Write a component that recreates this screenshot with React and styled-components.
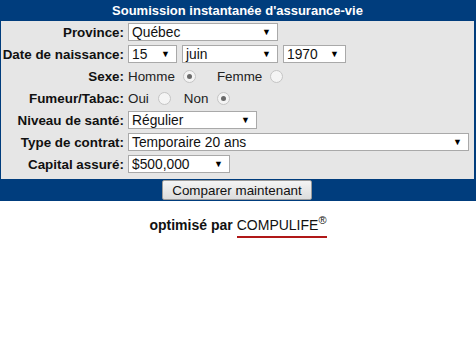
import React from 'react';
import styled, { createGlobalStyle } from 'styled-components';

const GlobalStyle = createGlobalStyle`
  html, body {
    margin: 0;
    padding: 0;
    background: #fff;
    font-family: "Liberation Sans", Arial, sans-serif;
    font-size: 13px;
    color: #000;
  }
`;

const Form = styled.form`
  display: flex;
  flex-direction: column;
  width: 476px;
  border-left: 1px solid #003d7d;
  border-right: 2px solid #003d7d;
  box-sizing: border-box;
`;

const Title = styled.div`
  height: 21px;
  line-height: 21px;
  background: #003d7d;
  color: #fff;
  font-weight: bold;
  font-size: 13px;
  text-align: center;
`;

const Body = styled.div`
  display: grid;
  grid-template-columns: 123px 1fr;
  grid-auto-rows: 22px;
  column-gap: 4px;
  align-items: center;
  background: #e6e6e6;
  padding-bottom: 4px;
`;

const Label = styled.label`
  text-align: right;
  font-weight: bold;
  font-size: 13.4px;
  color: #111;
`;

const Field = styled.div`
  display: flex;
  align-items: center;
  gap: ${p => p.$gap ?? 5}px;
`;

const SelectBox = styled.div`
  display: flex;
  align-items: center;
  justify-content: space-between;
  width: ${p => p.$w}px;
  height: 18px;
  box-sizing: border-box;
  padding: 0 6px 0 3px;
  background: #fff;
  border: 1px solid #a9a9a9;
  color: #111;
  font-size: 13.8px;
`;

const Arrow = styled.span`
  font-size: 9px;
  color: #000;
`;

const Option = styled.span`
  color: #222;
  font-size: 13.4px;
  margin-right: ${p => p.$mr || 0}px;
`;

const Radio = styled.span`
  display: inline-flex;
  align-items: center;
  justify-content: center;
  width: 11px;
  height: 11px;
  border-radius: 50%;
  border: 1px solid #c4c4c4;
  background: #f4f4f4;
  margin-right: ${p => p.$mr || 0}px;
  &::after {
    content: '';
    width: 5px;
    height: 5px;
    border-radius: 50%;
    background: ${p => (p.$checked ? '#6a6a6a' : 'transparent')};
  }
`;

const ButtonBar = styled.div`
  display: flex;
  justify-content: center;
  align-items: center;
  height: 22px;
  background: #003d7d;
`;

const Button = styled.button`
  width: 150px;
  height: 20px;
  margin-left: -1px;
  padding: 0;
  font-family: "Liberation Sans", Arial, sans-serif;
  font-size: 13.4px;
  color: #111;
  background: linear-gradient(#f4f4f4, #dcdcdc);
  border: 1px solid #9a9a9a;
  border-radius: 2px;
`;

const Footer = styled.div`
  display: flex;
  justify-content: center;
  align-items: flex-start;
  padding-top: 16px;
  font-size: 14px;
  color: #111;
`;

const Strong = styled.b`
  margin-right: 4px;
  line-height: 16px;
`;

const Brand = styled.span`
  border-bottom: 2px solid #b01818;
  padding-bottom: 3px;
  line-height: 16px;
`;

const Sup = styled.sup`
  font-size: 11px;
  line-height: 0;
`;

const Select = ({ w, children }) => (
  <SelectBox $w={w}>
    <span>{children}</span>
    <Arrow>▼</Arrow>
  </SelectBox>
);

export default function App() {
  return (
    <>
      <GlobalStyle />
      <Form>
        <Title>Soumission instantanée d'assurance-vie</Title>
        <Body>
          <Label>Province:</Label>
          <Field>
            <Select w={150}>Québec</Select>
          </Field>

          <Label>Date de naissance:</Label>
          <Field>
            <Select w={49}>15</Select>
            <Select w={96}>juin</Select>
            <Select w={63}>1970</Select>
          </Field>

          <Label>Sexe:</Label>
          <Field $gap={0}>
            <Option $mr={8}>Homme</Option>
            <Radio $checked $mr={21} />
            <Option $mr={8}>Femme</Option>
            <Radio />
          </Field>

          <Label>Fumeur/Tabac:</Label>
          <Field $gap={0}>
            <Option $mr={9}>Oui</Option>
            <Radio $mr={13} />
            <Option $mr={9}>Non</Option>
            <Radio $checked />
          </Field>

          <Label>Niveau de santé:</Label>
          <Field>
            <Select w={129}>Régulier</Select>
          </Field>

          <Label>Type de contrat:</Label>
          <Field>
            <Select w={341}>Temporaire 20 ans</Select>
          </Field>

          <Label>Capital assuré:</Label>
          <Field>
            <Select w={102}>$500,000</Select>
          </Field>
        </Body>
        <ButtonBar>
          <Button type="button">Comparer maintenant</Button>
        </ButtonBar>
      </Form>
      <Footer>
        <Strong>optimisé par</Strong>
        <Brand>
          COMPULIFE<Sup>®</Sup>
        </Brand>
      </Footer>
    </>
  );
}
